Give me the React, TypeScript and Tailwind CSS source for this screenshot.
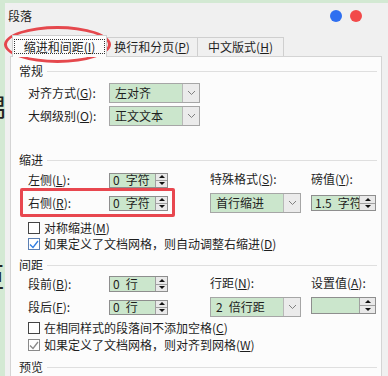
import React from "react";

const FONT = "font-['Noto_Sans_CJK_SC',sans-serif]";

function K({ k }: { k: string }) {
  return <span className="underline underline-offset-[1px]">{k}</span>;
}

function Chevron() {
  return (
    <svg width="9" height="6" viewBox="0 0 9 6">
      <polyline points="1,1 4.5,4.5 8,1" fill="none" stroke="#808080" strokeWidth="1" />
    </svg>
  );
}

function Dropdown({ value }: { value?: string }) {
  return (
    <div className="flex h-[20px] w-[91px] border border-[#a6a6a6] bg-[#cbe6cc]">
      <div className="flex flex-1 items-center whitespace-pre pl-[5px] leading-none">{value}</div>
      <div className="flex w-[17px] items-center justify-center border-l border-[#b8b8b8] bg-[#ebebeb]">
        <Chevron />
      </div>
    </div>
  );
}

function Spin({
  value,
  w,
  h,
  bw,
  clip,
}: {
  value?: string;
  w: string;
  h: string;
  bw: string;
  clip?: boolean;
}) {
  return (
    <div className={`flex border border-[#8e8e8e] bg-[#cbe6cc] ${w} ${h}`}>
      <div
        className={`flex flex-1 items-center whitespace-pre pl-[3px] leading-none ${
          clip ? "overflow-hidden" : ""
        }`}
      >
        {value}
      </div>
      <div className={`flex flex-col border-l border-[#a0a0a0] bg-[#e9e9e9] ${bw}`}>
        <div className="flex flex-1 items-center justify-center border-b border-[#a0a0a0]">
          <svg width="6" height="3" viewBox="0 0 6 3">
            <polygon points="0,3 3,0 6,3" fill="#111" />
          </svg>
        </div>
        <div className="flex flex-1 items-center justify-center">
          <svg width="6" height="3" viewBox="0 0 6 3">
            <polygon points="0,0 6,0 3,3" fill="#111" />
          </svg>
        </div>
      </div>
    </div>
  );
}

function Check({
  checked,
  gray,
  children,
  mt,
}: {
  checked?: boolean;
  gray?: boolean;
  children: React.ReactNode;
  mt: string;
}) {
  return (
    <div className={`flex h-[14px] items-center pl-[9px] ${mt}`}>
      <div
        className={`flex h-[12px] w-[12px] items-center justify-center border bg-white ${
          gray ? "border-[#8a8a8a]" : checked ? "border-[#5b7fb3]" : "border-[#444]"
        }`}
      >
        {checked && (
          <svg width="10" height="9" viewBox="0 0 10 9">
            <polyline
              points="1,4.5 4,7.5 9,1"
              fill="none"
              stroke={gray ? "#8a8a8a" : "#2f7de1"}
              strokeWidth="1.3"
            />
          </svg>
        )}
      </div>
      <span className="ml-[4px] whitespace-nowrap leading-none">{children}</span>
    </div>
  );
}

function Header({ text, mt }: { text: string; mt: string }) {
  return (
    <div className={`flex h-[14px] items-center pr-[4px] ${mt}`}>
      <span className="leading-none">{text}</span>
      <div className="ml-[4px] h-px flex-1 bg-[#dfdfdf]" />
    </div>
  );
}

export default function App() {
  return (
    <div
      className={`relative flex h-[376px] w-[388px] flex-col overflow-hidden bg-[#d3e9d3] pl-[5px] pt-[3px] text-[12px] text-[#1e1e1e] ${FONT}`}
    >
      {/* document behind the dialog */}
      <span className="absolute left-[-22px] top-[92px] text-[28px] leading-none text-[#222]">锦</span>
      <span className="absolute left-[-24px] top-[262px] text-[28px] leading-none text-[#222]">距</span>

      <div className="relative flex flex-1 flex-col bg-[#f0f0f0]">
        {/* title */}
        <div className="flex h-[26px] items-center pl-[3px] pr-[26px]">
          <span className="leading-none">段落</span>
          <div className="ml-auto flex gap-[8px]">
            <div className="h-[12px] w-[12px] rounded-full bg-[#2f6ff0]" />
            <div className="h-[12px] w-[12px] rounded-full bg-[#f24a4a]" />
          </div>
        </div>

        {/* tabs */}
        <div className="mt-[6px] flex h-[21px] items-end pl-[7px]">
          <div className="relative z-10 -mb-px flex h-[22px] w-[95px] items-center justify-center border border-b-0 border-[#cfcfcf] bg-[#fcfcfc]">
            <span className="flex h-[15px] w-[91px] items-center justify-center border border-dotted border-[#333] leading-none">
              缩进和间距(<K k="I" />)
            </span>
          </div>
          <div className="flex h-[19px] w-[91px] items-center justify-center border border-b-0 border-l-0 border-[#cfcfcf]">
            <span className="leading-none">
              换行和分页(<K k="P" />)
            </span>
          </div>
          <div className="flex h-[19px] w-[86px] items-center justify-center border border-b-0 border-l-0 border-[#cfcfcf]">
            <span className="leading-none">
              中文版式(<K k="H" />)
            </span>
          </div>
        </div>

        {/* panel */}
        <div className="ml-[5px] flex w-[372px] flex-1 flex-col border border-b-0 border-[#d4d4d4] bg-[#fcfcfc] pl-[8px]">
          <Header text="常规" mt="mt-[7px]" />
          <div className="mt-[5px] flex h-[20px] items-center pl-[9px]">
            <span className="w-[81px] leading-none">
              对齐方式(<K k="G" />):
            </span>
            <Dropdown value="左对齐" />
          </div>
          <div className="mt-[3px] flex h-[20px] items-center pl-[9px]">
            <span className="w-[81px] leading-none">
              大纲级别(<K k="O" />):
            </span>
            <Dropdown value="正文文本" />
          </div>

          <Header text="缩进" mt="mt-[27px]" />
          <div className="mt-[5px] flex h-[16px] items-center pl-[9px]">
            <div className="flex w-[182px] items-center">
              <span className="w-[81px] leading-none">
                左侧(<K k="L" />):
              </span>
              <Spin value={"0\u2002字符"} w="w-[59px]" h="h-[15px]" bw="w-[12px]" />
            </div>
            <span className="-mt-[3px] w-[101px] leading-none">
              特殊格式(<K k="S" />):
            </span>
            <span className="-mt-[3px] leading-none">
              磅值(<K k="Y" />):
            </span>
          </div>
          <div className="mt-[5px] flex h-[20px] items-center pl-[9px]">
            <div className="flex w-[182px] items-center">
              <span className="w-[81px] leading-none">
                右侧(<K k="R" />):
              </span>
              <Spin value={"0\u2002字符"} w="w-[59px]" h="h-[15px]" bw="w-[12px]" />
            </div>
            <div className="w-[101px]">
              <Dropdown value="首行缩进" />
            </div>
            <Spin value={"1.5\u2002字符"} w="w-[65px]" h="h-[16px]" bw="w-[16px]" clip />
          </div>
          <Check mt="mt-[8px]">
            对称缩进(<K k="M" />)
          </Check>
          <Check checked mt="mt-[2px]">
            如果定义了文档网格，则自动调整右缩进(<K k="D" />)
          </Check>

          <Header text="间距" mt="mt-[7px]" />
          <div className="mt-[4px] flex h-[16px] items-center pl-[9px]">
            <div className="flex w-[182px] items-center">
              <span className="w-[81px] leading-none">
                段前(<K k="B" />):
              </span>
              <Spin value={"0\u2002行"} w="w-[59px]" h="h-[16px]" bw="w-[12px]" />
            </div>
            <span className="-mt-[2px] w-[101px] leading-none">
              行距(<K k="N" />):
            </span>
            <span className="-mt-[2px] leading-none">
              设置值(<K k="A" />):
            </span>
          </div>
          <div className="mt-[5px] flex h-[20px] items-center pl-[9px]">
            <div className="flex w-[182px] items-center">
              <span className="w-[81px] leading-none">
                段后(<K k="F" />):
              </span>
              <Spin value={"0\u2002行"} w="w-[59px]" h="h-[15px]" bw="w-[12px]" />
            </div>
            <div className="w-[101px]">
              <Dropdown value={"2\u2002倍行距"} />
            </div>
            <div className="-mt-[3px]">
              <Spin w="w-[65px]" h="h-[17px]" bw="w-[16px]" />
            </div>
          </div>
          <Check mt="mt-[4px]">
            在相同样式的段落间不添加空格(<K k="C" />)
          </Check>
          <Check checked gray mt="mt-[3px]">
            如果定义了文档网格，则对齐到网格(<K k="W" />)
          </Check>

          <Header text="预览" mt="mt-[8px]" />
        </div>
      </div>

      {/* annotations */}
      <div className="absolute left-[4px] top-[26px] h-[37px] w-[107px] rounded-[50%] border-[3px] border-[#e5484d]" />
      <div className="absolute left-[20px] top-[188px] h-[29px] w-[155px] rounded-[2px] border-[3px] border-[#e8474f]" />
    </div>
  );
}
